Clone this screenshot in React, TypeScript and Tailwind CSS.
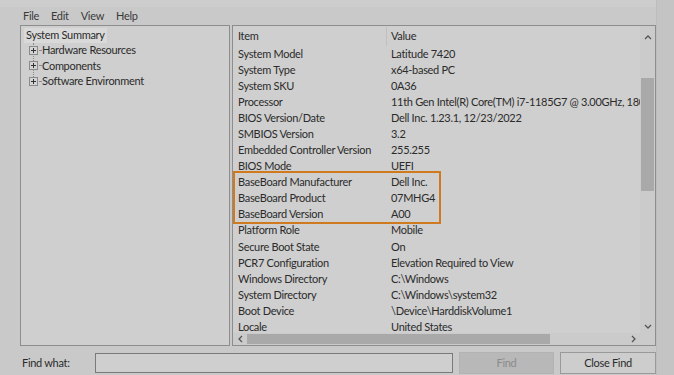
import React from 'react';

const rows: [string, string][] = [
  ['System Model', 'Latitude 7420'],
  ['System Type', 'x64-based PC'],
  ['System SKU', '0A36'],
  ['Processor', '11th Gen Intel(R) Core(TM) i7-1185G7 @ 3.00GHz, 1805 Mhz, 4 Core(s), 8 Logical Processor(s)'],
  ['BIOS Version/Date', 'Dell Inc. 1.23.1, 12/23/2022'],
  ['SMBIOS Version', '3.2'],
  ['Embedded Controller Version', '255.255'],
  ['BIOS Mode', 'UEFI'],
  ['BaseBoard Manufacturer', 'Dell Inc.'],
  ['BaseBoard Product', '07MHG4'],
  ['BaseBoard Version', 'A00'],
  ['Platform Role', 'Mobile'],
  ['Secure Boot State', 'On'],
  ['PCR7 Configuration', 'Elevation Required to View'],
  ['Windows Directory', 'C:\\Windows'],
  ['System Directory', 'C:\\Windows\\system32'],
  ['Boot Device', '\\Device\\HarddiskVolume1'],
  ['Locale', 'United States'],
];

function Plus() {
  return (
    <svg width="9" height="9" viewBox="0 0 9 9" className="shrink-0">
      <rect x="0.5" y="0.5" width="8" height="8" fill="#d4d4d4" stroke="#8a8a8a" />
      <path d="M2 4.5h5M4.5 2v5" stroke="#333" />
    </svg>
  );
}

function Row({ item, value }: { item: string; value: string }) {
  return (
    <div className="flex h-[16.07px] items-center whitespace-nowrap">
      <div className="w-[154px] shrink-0 pl-[5px]">{item}</div>
      <div className="pl-[4px]">{value}</div>
    </div>
  );
}

export default function App() {
  return (
    <div
      className="w-[674px] h-[375px] bg-[#c4c4c4] overflow-hidden text-[#2b2b2b] text-[11px] tracking-[-0.3px]"
      style={{ fontFamily: '"Segoe UI", Lato, sans-serif' }}
    >
      <div className="w-[657px] h-full bg-[#c9c9c9] border-r border-[#bdbdbd] flex flex-col">
        <div className="h-[7px] bg-[#cdcdcd]" />
        <div className="flex gap-[12px] pl-[23px] h-[18px] items-center text-[#3a3a3a]">
          <span>File</span>
          <span>Edit</span>
          <span>View</span>
          <span>Help</span>
        </div>
        <div className="flex gap-[2px] pl-[20px] h-[321px]">
          {/* tree */}
          <div className="w-[210px] border border-[#8d8d8d] bg-[#cfcfcf] pt-[2px] pl-[3px]">
            <div className="h-[15px] w-fit bg-[#d9d9d9] px-[2px] flex items-center">System Summary</div>
            <div className="relative pl-[5px]">
              <div className="absolute left-[9px] top-0 h-[40px] border-l border-dotted border-[#8a8a8a]" />
              {['Hardware Resources', 'Components', 'Software Environment'].map((t) => (
                <div key={t} className="relative flex items-center gap-[1px] h-[15.3px]">
                  <Plus />
                  <span className="w-[2px] border-t border-dotted border-[#8a8a8a]" />
                  <span>{t}</span>
                </div>
              ))}
            </div>
          </div>
          {/* list */}
          <div className="flex-1 border border-[#8d8d8d] bg-[#cfcfcf] flex flex-col overflow-hidden">
            <div className="flex flex-1 min-h-0">
              <div className="flex-1 overflow-hidden relative">
                <div className="flex h-[19px] mt-[1px] items-center">
                  <div className="w-[154px] pl-[5px] border-r border-[#bfbfbf] h-full flex items-center">Item</div>
                  <div className="pl-[4px]">Value</div>
                </div>
                <div>
                  {rows.map(([a, b]) => (
                    <Row key={a} item={a} value={b} />
                  ))}
                </div>
                <div className="absolute left-0 top-[145px] w-[208px] h-[53px] border-2 border-[#cf7a1e]" />
              </div>
              <div className="w-[15px] bg-[#cbcbcb] flex flex-col items-center">
                <div className="h-[22px] flex items-center">
                  <svg width="8" height="5" viewBox="0 0 8 5"><path d="M1 4l3-3 3 3" stroke="#555" fill="none" strokeWidth="1.3" /></svg>
                </div>
                <div className="w-[13px] h-[113px] mt-[30px] bg-[#a9a9a9]" />
                <div className="flex-1" />
                <div className="h-[14px] flex items-center">
                  <svg width="8" height="5" viewBox="0 0 8 5"><path d="M1 1l3 3 3-3" stroke="#555" fill="none" strokeWidth="1.3" /></svg>
                </div>
              </div>
            </div>
            <div className="h-[12px] flex items-center bg-[#cbcbcb]">
              <div className="w-[14px] flex justify-center">
                <svg width="5" height="8" viewBox="0 0 5 8"><path d="M4 1L1 4l3 3" stroke="#555" fill="none" strokeWidth="1.3" /></svg>
              </div>
              <div className="w-[303px] h-[10px] bg-[#a9a9a9]" />
              <div className="flex-1" />
              <div className="w-[14px] flex justify-center">
                <svg width="5" height="8" viewBox="0 0 5 8"><path d="M1 1l3 3-3 3" stroke="#555" fill="none" strokeWidth="1.3" /></svg>
              </div>
              <div className="w-[15px]" />
            </div>
          </div>
        </div>
        <div className="flex items-center pl-[22px] mt-[6px] h-[22px]">
          <span className="w-[73px]">Find what:</span>
          <div className="w-[358px] h-[20px] border border-[#7a7a7a] bg-[#cfcfcf]" />
          <div className="ml-[6px] w-[95px] h-[22px] bg-[#b8b8b8] border border-[#b3b3b3] flex items-center justify-center text-[#8a8a8a]">
            Find
          </div>
          <div className="ml-[6px] w-[96px] h-[22px] bg-[#cdcdcd] border border-[#9a9a9a] flex items-center justify-center">
            Close Find
          </div>
        </div>
      </div>
    </div>
  );
}
